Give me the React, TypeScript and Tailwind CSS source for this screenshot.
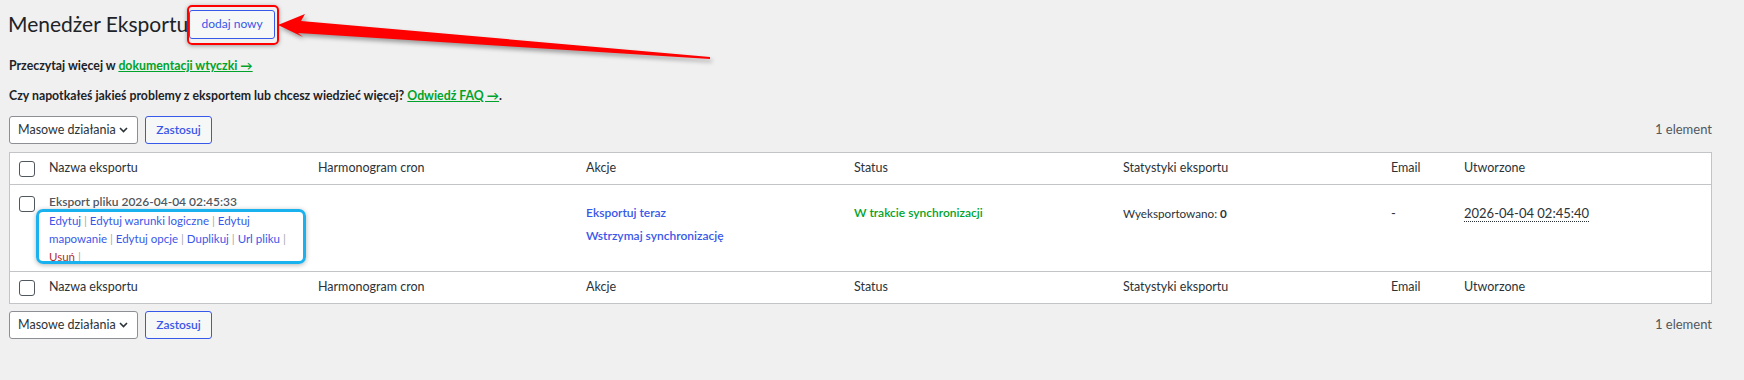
import React from 'react';

function Checkbox() {
  return <span className="block w-4 h-4 rounded-[3px] border border-[#50575e] bg-white" />;
}

function BulkActions() {
  return (
    <div className="flex items-center justify-between h-[28px]">
      <div className="flex items-center gap-[7px] h-full">
        <div className="flex items-center justify-between h-full w-[129px] pl-[8px] pr-[9px] bg-white border border-[#8c8f94] rounded-[3px] text-[12.5px] text-[#2c3338] whitespace-nowrap">
          <span>Masowe działania</span>
          <svg width="9" height="6" viewBox="0 0 9 6" fill="none">
            <path d="M1 1l3.5 3.5L8 1" stroke="#2c3338" strokeWidth="1.6" />
          </svg>
        </div>
        <button className="h-full w-[67px] bg-[#f6f7f7] border border-[#3858e9] rounded-[3px] text-[12px] font-semibold text-[#3858e9]">
          Zastosuj
        </button>
      </div>
      <span className="text-[13px] text-[#50575e]">1 element</span>
    </div>
  );
}

const cols = 'grid grid-cols-[29px_269px_268px_268px_269px_268px_73px_1fr]';

function HeadRow({ top }: { top?: boolean }) {
  return (
    <div className={`${cols} h-[32px] items-center text-[12.5px] text-[#2c3338] ${top ? 'border-b' : 'border-t'} border-[#c3c4c7]`}>
      <div className="pl-[9px]"><Checkbox /></div>
      <div className="pl-[10px]">Nazwa eksportu</div>
      <div className="pl-[10px]">Harmonogram cron</div>
      <div className="pl-[10px]">Akcje</div>
      <div className="pl-[10px]">Status</div>
      <div className="pl-[10px]">Statystyki eksportu</div>
      <div className="pl-[10px]">Email</div>
      <div className="pl-[10px]">Utworzone</div>
    </div>
  );
}

export default function App() {
  const sep = <span className="text-[#a7aaad]"> | </span>;
  return (
    <div className="relative min-h-screen bg-[#f0f0f1] pl-[9px] pr-[32px] pt-[9px] font-['Lato',sans-serif] text-[13px] text-[#3c434a]">
      <div className="flex items-center h-[30px]">
        <h1 className="-ml-px text-[21px] leading-[30px] font-normal text-[#1d2327] whitespace-nowrap">Menedżer Eksportu</h1>
        <div className="relative ml-[1px]">
          <button className="h-[29px] w-[86px] bg-[#f6f7f7] border border-[#3858e9] rounded-[3px] text-[12px] text-[#3858e9] whitespace-nowrap">
            dodaj nowy
          </button>
          <span className="absolute -left-[2px] -top-[5px] -right-[4px] -bottom-[6px] rounded-[5px] border-2 border-[#ff0000] shadow-[0_1px_4px_rgba(0,0,0,0.35)]" />
        </div>
      </div>

      <svg className="absolute left-0 top-0 drop-shadow-[2px_3px_2px_rgba(0,0,0,0.35)]" width="720" height="70" viewBox="0 0 720 70">
        <polygon points="278,25 305,14 301,21 710,57 710,59 298,33 303,37" fill="#ff0000" />
      </svg>

      <p className="mt-[17px] leading-[20px] text-[12.3px] font-bold text-[#1d2327]">
        Przeczytaj więcej w{' '}
        <a className="text-[#00a32a] underline">dokumentacji wtyczki →</a>
      </p>
      <p className="mt-[10px] leading-[20px] text-[12.3px] font-bold text-[#1d2327]">
        Czy napotkałeś jakieś problemy z eksportem lub chcesz wiedzieć więcej?{' '}
        <a className="text-[#00a32a] underline">Odwiedź FAQ →</a>.
      </p>

      <div className="mt-[10px]">
        <BulkActions />
      </div>

      <div className="mt-[8px] bg-white border border-[#c3c4c7]">
        <HeadRow top />
        <div className={`${cols} h-[86px] text-[13px]`}>
          <div className="pl-[9px] pt-[11px]"><Checkbox /></div>
          <div className="relative pl-[10px] pr-[10px] pt-[7px]">
            <div className="leading-[19px] text-[12px] font-semibold text-[#50575e]">Eksport pliku 2026-04-04 02:45:33</div>
            <div className="mt-[1px] leading-[18px] text-[11.5px] text-[#3858e9]">
              Edytuj{sep}Edytuj warunki logiczne{sep}Edytuj mapowanie{sep}Edytuj opcje{sep}Duplikuj{sep}Url pliku{sep}
              <span className="text-[#b32d2e]">Usuń</span>{sep}
            </div>
            <span className="absolute -left-[3px] top-[24px] w-[270px] h-[55px] rounded-[7px] border-[3px] border-[#19b2ef] shadow-[0_1px_5px_rgba(0,0,0,0.3)]" />
          </div>
          <div className="pl-[10px]" />
          <div className="pl-[10px] pt-[18px] leading-[20px] text-[12px] font-semibold text-[#3858e9]">
            <div>Eksportuj teraz</div>
            <div className="mt-[3px]">Wstrzymaj synchronizację</div>
          </div>
          <div className="pl-[10px] pt-[18px] leading-[20px] text-[12px] font-semibold text-[#00a32a]">W trakcie synchronizacji</div>
          <div className="pl-[10px] pt-[18px] leading-[20px] text-[11.7px] text-[#2c3338]">
            Wyeksportowano: <span className="font-bold">0</span>
          </div>
          <div className="pl-[10px] pt-[18px] leading-[20px] text-[#2c3338]">-</div>
          <div className="pl-[10px] pt-[18px] leading-[20px] text-[#2c3338]">
            <span className="border-b border-dotted border-[#2c3338]">2026-04-04 02:45:40</span>
          </div>
        </div>
        <HeadRow />
      </div>

      <div className="mt-[7px]">
        <BulkActions />
      </div>
    </div>
  );
}
